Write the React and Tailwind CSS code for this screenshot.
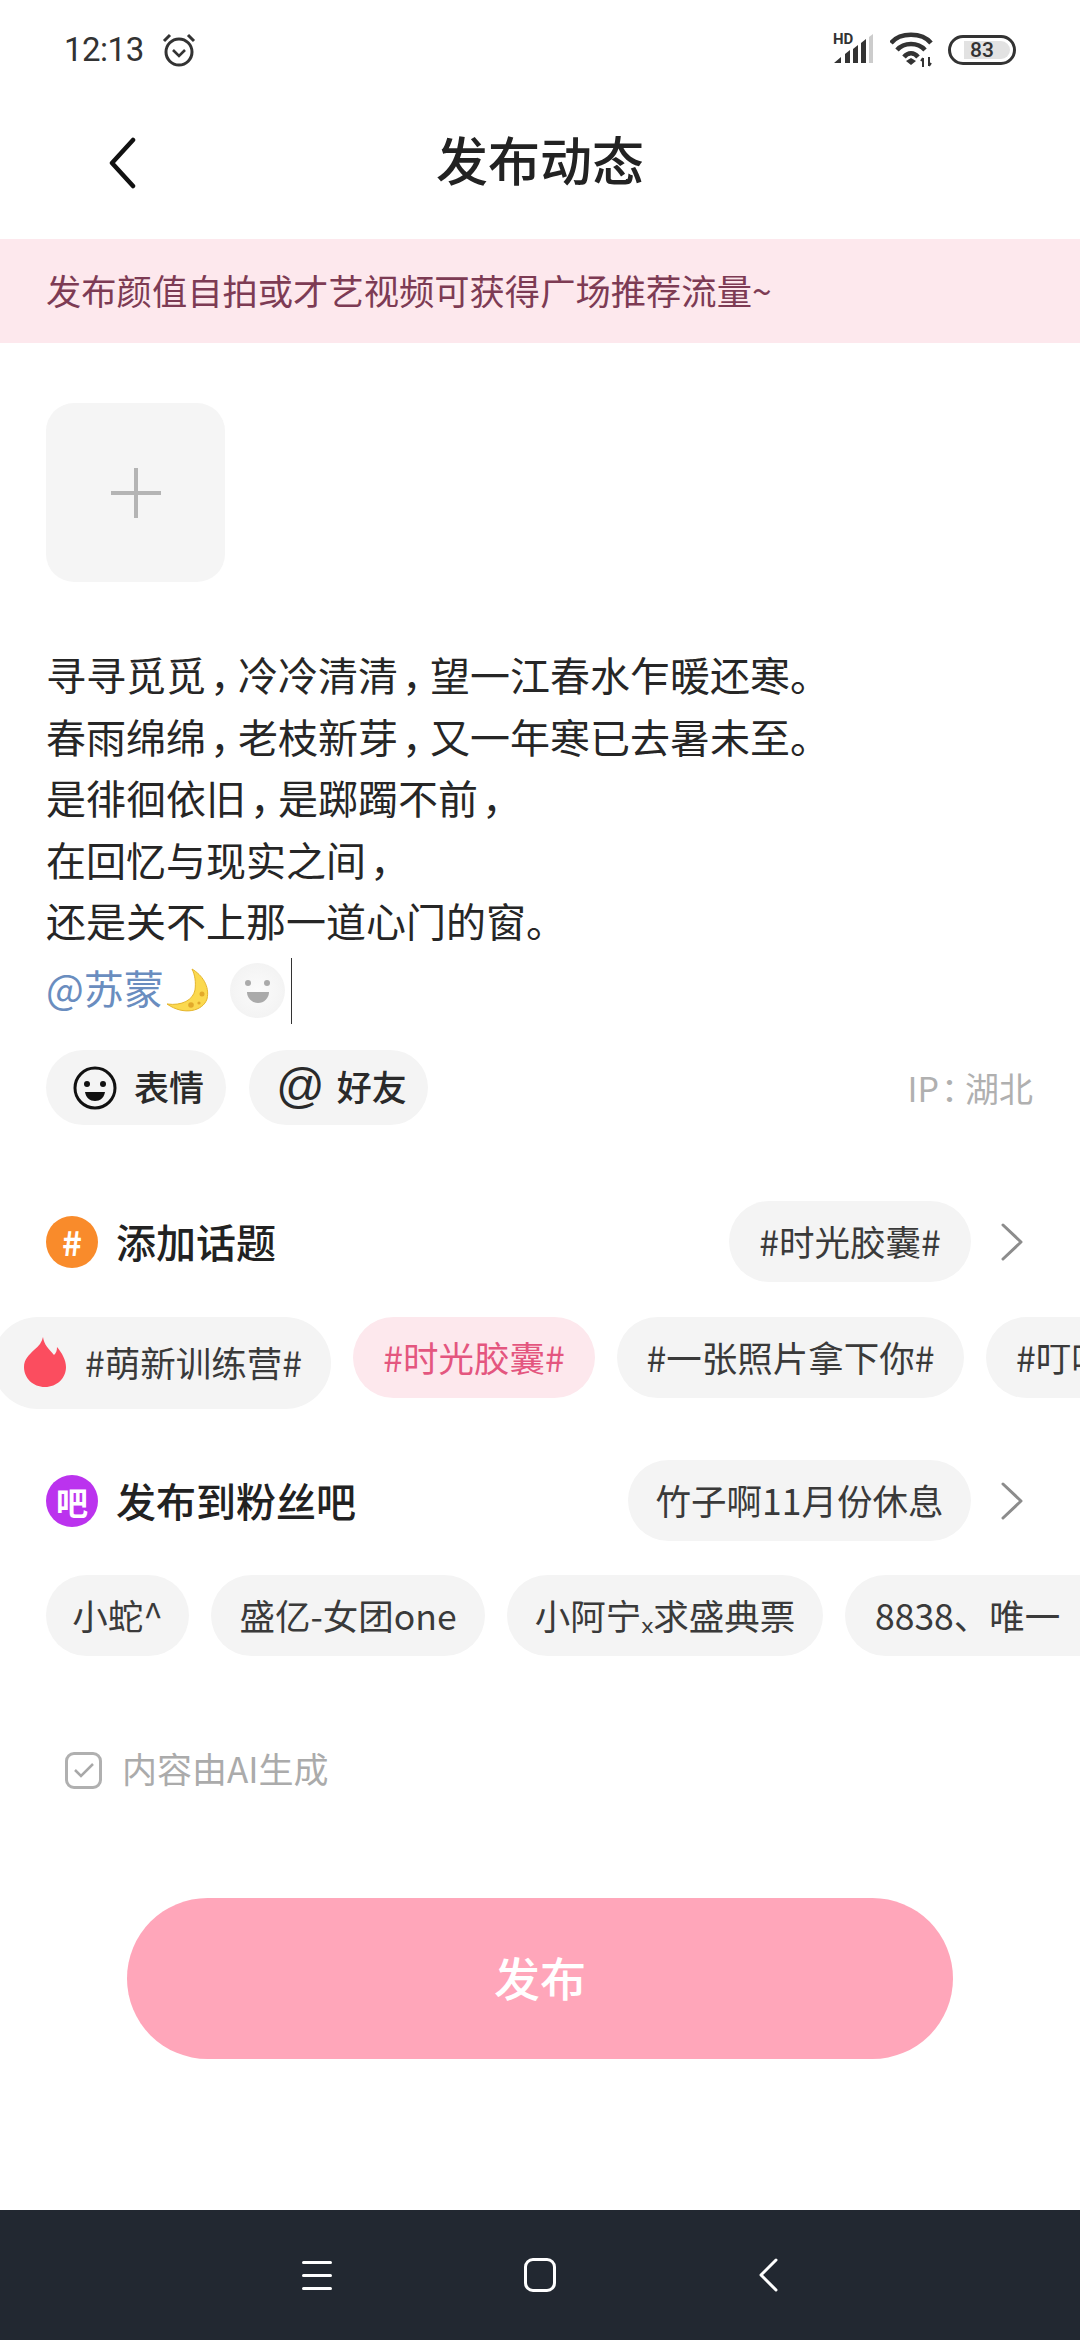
const cjk = "font-['Noto_Sans_CJK_SC','Noto_Sans',sans-serif]";

function Chip({ text, className = '' }) {
  return (
    <div className={`h-[81px] pb-[2px] shrink-0 rounded-full bg-[#f4f4f4] flex items-center justify-center text-[35.5px] text-[#3a3a3a] whitespace-nowrap ${className}`}>
      {text}
    </div>
  );
}

// full-width punctuation in the post sits closer than a whole cell
function Comma() {
  return <span className="[font-feature-settings:'halt'] ml-[4px] mr-[8px]">，</span>;
}

function SectionRow({ icon, title, pick, pickWidth }) {
  return (
    <div className="h-[81px] flex items-center pl-[46px]">
      {icon}
      <span className="ml-[18px] text-[40px] font-medium text-[#222] -mt-[2px]">{title}</span>
      <div className="ml-auto flex items-center">
        <Chip text={pick} className={pickWidth} />
        <svg className="ml-[29px] mr-[56px]" width="24" height="38" viewBox="0 0 24 38" fill="none" stroke="#8c8c8c" strokeWidth="3" strokeLinecap="round" strokeLinejoin="round">
          <path d="M3 2l18 17L3 36" />
        </svg>
      </div>
    </div>
  );
}

function App() {
  return (
    <div className={`w-[1080px] h-[2340px] bg-white flex flex-col overflow-hidden ${cjk}`}>
      {/* Status bar */}
      <div className="h-[100px] shrink-0 flex items-center pl-[64px] pr-[64px] text-[#333]">
        <span className="text-[33px] font-['Roboto',sans-serif] tracking-[-0.5px]">12:13</span>
        <svg className="ml-[17px]" width="36" height="36" viewBox="0 0 36 36" fill="none" stroke="#333" strokeWidth="3">
          <circle cx="18" cy="20" r="13" />
          <path d="M12 18l6 6 6-6" strokeWidth="2.6" />
          <path d="M3 9l6-6M33 9l-6-6" strokeWidth="3" />
        </svg>
        <div className="ml-auto flex items-center">
          <svg width="44" height="38" viewBox="0 0 44 38">
            <text x="1" y="13" fontSize="15" fontWeight="700" fontFamily="Roboto, sans-serif" fill="#333">HD</text>
            <path d="M2 32l7-6v6zM13 32v-9l5-4v13zM21 32V18l5-4v18zM29 32V12l5-4v24z" fill="#333" />
            <path d="M37 32V6l4-3v29z" fill="#ccc" />
          </svg>
          <svg className="ml-[14px]" width="46" height="38" viewBox="0 0 46 38" fill="none" stroke="#333" strokeWidth="4.5">
            <path d="M1 12C10 1 32 1 41 12" />
            <path d="M7 19C14 11 28 11 35 19" />
            <path d="M14 26C18 21 24 21 28 26" />
            <path d="M21 34l-5-4 5-3 5 3z" fill="#333" stroke="none" />
            <path d="M33 36V27M31 30l2-3M39 26v9M39 35l2-3" strokeWidth="2" />
          </svg>
          <div className="ml-[12px] w-[68px] h-[30px] rounded-full border-[3px] border-[#333] relative flex items-center justify-center overflow-hidden">
            <div className="absolute left-[13px] right-[3px] top-[3px] bottom-[3px] bg-[#e2e2e2] rounded-r-full" />
            <span className="relative text-[21px] leading-none font-medium font-['Roboto',sans-serif]">83</span>
          </div>
        </div>
      </div>

      {/* Title */}
      <div className="h-[139px] shrink-0 pb-[22px] relative flex items-center justify-center">
        <svg className="absolute left-[106px] top-[37px]" width="32" height="52" viewBox="0 0 32 52" fill="none" stroke="#111" strokeWidth="4.5" strokeLinecap="round" strokeLinejoin="round">
          <path d="M27 3L6 26l21 23" />
        </svg>
        <h1 className="text-[52px] font-medium text-[#222]">发布动态</h1>
      </div>

      {/* Banner */}
      <div className="h-[104px] shrink-0 bg-[#fde8ed] flex items-center pl-[46px] pb-[2px] text-[35.3px] text-[#7d3b54]">
        发布颜值自拍或才艺视频可获得广场推荐流量~
      </div>

      {/* Add picture */}
      <div className="mt-[60px] ml-[46px] w-[179px] h-[179px] shrink-0 rounded-[28px] bg-[#f5f5f5] flex items-center justify-center">
        <svg width="50" height="50" viewBox="0 0 50 50" stroke="#b4b4b4" strokeWidth="4">
          <path d="M25 0v50M0 25h50" />
        </svg>
      </div>

      {/* Post text */}
      <div className="mt-[62px] pl-[46px] text-[40px] leading-[61.5px] text-[#262626] shrink-0">
        <p>寻寻觅觅<Comma />冷冷清清<Comma />望一江春水乍暖还寒。</p>
        <p>春雨绵绵<Comma />老枝新芽<Comma />又一年寒已去暑未至。</p>
        <p>是徘徊依旧<Comma />是踯躅不前<Comma /></p>
        <p>在回忆与现实之间<Comma /></p>
        <p>还是关不上那一道心门的窗。</p>
        <div className="flex items-center h-[61.5px] pt-[17px]">
          <span className="text-[#6a8dbf] -mt-[6px]">@苏蒙</span>
          <svg className="ml-[2px]" width="44" height="46" viewBox="0 0 44 46">
            <path d="M26 1C36 7 44 18 41 31 37 43 18 48 1 36 16 38 27 32 29 22 30 14 29 7 26 1z" fill="#fbd94f" stroke="#e5b52c" strokeWidth="1" />
            <circle cx="36" cy="26" r="2.5" fill="#e2a92a" />
            <circle cx="25" cy="37" r="2.8" fill="#e2a92a" />
            <circle cx="33" cy="35" r="1.6" fill="#e2a92a" />
          </svg>
          <div className="ml-[20px] w-[55px] h-[55px] shrink-0 rounded-full bg-[radial-gradient(circle,#fbfbfb,#f0f0f0)] relative">
            <span className="absolute left-[15px] top-[17px] w-[6px] h-[6px] rounded-full bg-[#aaa]" />
            <span className="absolute right-[15px] top-[17px] w-[6px] h-[6px] rounded-full bg-[#aaa]" />
            <span className="absolute left-[17px] top-[29px] w-[22px] h-[11px] rounded-b-full bg-[#aaa]" />
          </div>
          <span className="ml-[6px] w-[1.5px] h-[66px] shrink-0 bg-[#333]" />
        </div>
      </div>

      {/* Emoji and friend */}
      <div className="mt-[37px] pl-[46px] pr-[47px] h-[75px] shrink-0 flex items-center text-[35px] font-medium text-[#2a2a2a]">
        <div className="w-[180px] h-[75px] rounded-full bg-[#f4f4f4] flex items-center pl-[27px]">
          <svg width="44" height="44" viewBox="0 0 44 44">
            <circle cx="22" cy="22" r="20" fill="none" stroke="#111" strokeWidth="3" />
            <circle cx="14" cy="18" r="3" fill="#111" />
            <circle cx="30" cy="18" r="3" fill="#111" />
            <path d="M12 26h20c-1 6-5 9-10 9s-9-3-10-9z" fill="#111" />
          </svg>
          <span className="ml-[17px] -mt-[2px]">表情</span>
        </div>
        <div className="ml-[23px] w-[179px] h-[75px] rounded-full bg-[#f4f4f4] flex items-center pl-[27px]">
          <span className="text-[48px] leading-none font-normal font-['Liberation_Sans',sans-serif] -mt-[4px]">@</span>
          <span className="ml-[12px] -mt-[2px]">好友</span>
        </div>
        <span className="ml-auto text-[34px] font-normal text-[#b0b0b0]">
          IP<span className="[font-feature-settings:'halt'] ml-[2px] mr-[7px]">：</span>湖北
        </span>
      </div>

      {/* Topics */}
      <div className="mt-[76px] shrink-0">
        <SectionRow
          title="添加话题"
          pick="#时光胶囊#"
          pickWidth="w-[242px]"
          icon={
            <div className="w-[52px] h-[52px] rounded-full bg-[#f98b2b] flex items-center justify-center text-white text-[34px] font-bold leading-none">#</div>
          }
        />
        <div className="mt-[35px] flex items-start gap-[22px] h-[92px] -ml-[8px]">
          <div className="w-[339px] h-[92px] pb-[2px] shrink-0 rounded-full bg-[#f4f4f4] flex items-center pl-[32px] text-[35.5px] text-[#3a3a3a]">
            <svg width="42" height="50" viewBox="0 0 42 50">
              <path d="M19 0c1 8 6 12 11 18 2-2 3-4 3-8 5 6 9 13 9 20 0 11-9 20-21 20S0 41 0 30C0 22 5 18 10 13c5-4 8-8 9-13z" fill="#fb4d5f" />
            </svg>
            <span className="ml-[19px] whitespace-nowrap">#萌新训练营#</span>
          </div>
          <Chip text="#时光胶囊#" className="w-[242px] !bg-[#fde8ed] !text-[#e4567f]" />
          <Chip text="#一张照片拿下你#" className="w-[347px]" />
          <Chip text="#叮咚#" className="w-[300px] !justify-start pl-[30px]" />
        </div>
      </div>

      {/* Fan groups */}
      <div className="mt-[51px] shrink-0">
        <SectionRow
          title="发布到粉丝吧"
          pick="竹子啊11月份休息"
          pickWidth="w-[343px]"
          icon={
            <div className="w-[52px] h-[52px] rounded-full bg-[#bb33ee] flex items-center justify-center text-white text-[32px] font-bold leading-none">吧</div>
          }
        />
        <div className="mt-[34px] flex gap-[22px] pl-[46px]">
          <Chip text="小蛇^" className="w-[143px]" />
          <Chip text="盛亿-女团one" className="w-[274px]" />
          <Chip text="小阿宁ₓ求盛典票" className="w-[316px]" />
          <Chip text="8838、唯一" className="w-[300px] !justify-start pl-[30px]" />
        </div>
      </div>

      {/* AI checkbox */}
      <div className="mt-[95px] ml-[65px] h-[38px] shrink-0 flex items-center">
        <div className="w-[37px] h-[37px] rounded-[9px] border-[3px] border-[#b0b0b0] flex items-center justify-center">
          <svg width="22" height="16" viewBox="0 0 22 16" fill="none" stroke="#a8a8a8" strokeWidth="2.5">
            <path d="M2 8l6 6L20 2" />
          </svg>
        </div>
        <span className="ml-[20px] text-[35px] text-[#ababab] -mt-[4px]">内容由AI生成</span>
      </div>

      {/* Submit */}
      <button className="mt-[109px] ml-[127px] w-[826px] h-[161px] shrink-0 rounded-full bg-[#ffa6ba] text-white text-[46px] font-medium pb-[4px]">
        发布
      </button>

      {/* System nav */}
      <div className="mt-auto h-[130px] shrink-0 bg-[#222831] flex items-center">
        <div className="ml-[302px] w-[30px] flex flex-col gap-[10px]">
          <span className="h-[3px] bg-white rounded-full" />
          <span className="h-[3px] bg-white rounded-full" />
          <span className="h-[3px] bg-white rounded-full" />
        </div>
        <div className="ml-[192px] w-[32px] h-[34px] rounded-[9px] border-[3px] border-white" />
        <svg className="ml-[202px]" width="20" height="34" viewBox="0 0 20 34" fill="none" stroke="#fff" strokeWidth="3" strokeLinecap="round" strokeLinejoin="round">
          <path d="M18 2L3 17l15 15" />
        </svg>
      </div>
    </div>
  );
}

export default App;
